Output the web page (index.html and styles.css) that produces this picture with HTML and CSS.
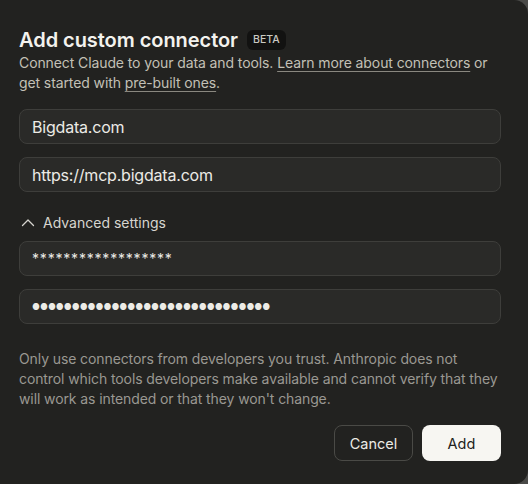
FILE: index.html
```html
<!DOCTYPE html>
<html lang="en">
<head>
    <meta charset="UTF-8">
    <meta name="viewport" content="width=device-width, initial-scale=1.0">
    <title>Add custom connector</title>
    <link rel="stylesheet" href="styles.css">
</head>
<body>
    <div class="dialog">
        <div class="dialog-header">
            <h2>Add custom connector</h2>
            <span class="badge">BETA</span>
        </div>
        <p class="intro">Connect Claude to your data and tools. <a href="#">Learn more about connectors</a> or get started with <a href="#">pre-built ones</a>.</p>

        <div class="fields">
            <input type="text" class="field" value="Bigdata.com">
            <input type="text" class="field" value="https://mcp.bigdata.com">
        </div>

        <button type="button" class="toggle">
            <svg width="16" height="16" viewBox="0 0 16 16" fill="none" stroke="currentColor" stroke-width="1.3" stroke-linecap="round" stroke-linejoin="round">
                <path d="M2.5 10.5 L8 5 L13.5 10.5"/>
            </svg>
            Advanced settings
        </button>

        <div class="fields">
            <input type="text" class="field masked" value="******************">
            <input type="text" class="field dots" value="●●●●●●●●●●●●●●●●●●●●●●●●●●●●●●">
        </div>

        <p class="warning">Only use connectors from developers you trust. Anthropic does not control which tools developers make available and cannot verify that they will work as intended or that they won't change.</p>

        <div class="buttons">
            <button type="button" class="btn btn-secondary">Cancel</button>
            <button type="button" class="btn btn-primary">Add</button>
        </div>
    </div>
</body>
</html>
```

FILE: styles.css
```css
html, body {
    margin: 0;
    padding: 0;
    height: 100%;
}
body {
    background-color: #4a4a48;
    font-family: Inter, "Noto Sans", sans-serif;
    color: #ecebe6;
}
.dialog {
    box-sizing: border-box;
    height: 484px;
    background-color: #222220;
    border-radius: 0 14px 14px 0;
    padding: 27px 27px 0 19px;
}
.dialog-header {
    display: flex;
    align-items: center;
    gap: 9px;
}
.dialog-header h2 {
    margin: 0;
    font-size: 20px;
    font-weight: 600;
    line-height: 26px;
    letter-spacing: -0.05px;
    color: #f3f2ee;
}
.badge {
    background-color: #121211;
    color: #c9c8c2;
    font-size: 10.5px;
    font-weight: 500;
    padding: 3px 6px;
    border-radius: 6px;
    line-height: 14px;
}
.intro {
    margin: 0;
    font-size: 14px;
    line-height: 20px;
    color: #c2c0b6;
    letter-spacing: -0.1px;
}
.intro a {
    color: #c2c0b6;
    text-decoration: underline;
    text-decoration-color: #8a8880;
    text-underline-offset: 3px;
}
.fields {
    display: flex;
    flex-direction: column;
    gap: 13px;
}
.intro + .fields {
    margin-top: 16px;
}
.field {
    box-sizing: border-box;
    width: 100%;
    height: 35px;
    padding: 0 12px;
    background-color: #2a2a28;
    border: 1px solid #3e3e3b;
    border-radius: 8px;
    color: #ecebe6;
    font-family: inherit;
    font-size: 16px;
    letter-spacing: -0.2px;
    outline: none;
}
.field.masked {
    font-size: 14px;
    letter-spacing: 0.8px;
}
.field.dots {
    font-size: 8.7px;
    letter-spacing: 0;
}
.toggle {
    display: flex;
    align-items: center;
    gap: 7px;
    margin: 22px 0 10px 1px;
    padding: 0;
    background: none;
    border: none;
    color: #d6d5cf;
    font-family: inherit;
    font-size: 14px;
    cursor: pointer;
}
.warning {
    margin: 25px 0 0 0;
    font-size: 14px;
    line-height: 20px;
    color: #9a9892;
    letter-spacing: -0.1px;
}
.buttons {
    display: flex;
    justify-content: flex-end;
    gap: 9px;
    margin-top: 16px;
}
.btn {
    height: 36px;
    border-radius: 8px;
    font-family: inherit;
    font-size: 14.5px;
    font-weight: 400;
    cursor: pointer;
}
.btn-secondary {
    width: 79px;
    background: none;
    border: 1px solid #4a4a46;
    color: #ecebe6;
}
.btn-primary {
    width: 79px;
    background-color: #f7f6f2;
    border: none;
    color: #222220;
}
```
